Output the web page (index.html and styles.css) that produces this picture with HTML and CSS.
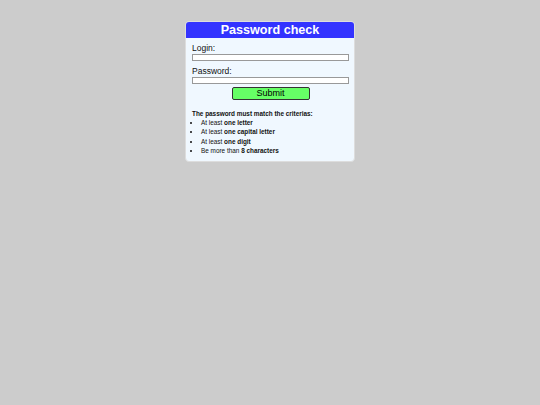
FILE: index.html
```html
<!DOCTYPE html>
<html>
<head>
<meta charset="utf-8">
<link rel="stylesheet" href="styles.css">
</head>
<body>
<div class="card">
  <div class="card-header">Password check</div>
  <form class="card-body">
    <label class="field-label" for="login">Login:</label>
    <input class="field-input" id="login" type="text">
    <label class="field-label" for="password">Password:</label>
    <input class="field-input" id="password" type="password">
    <div class="actions"><button class="submit" type="button">Submit</button></div>
    <div class="rules">
      <p class="rules-title">The password must match the criterias:</p>
      <ul class="rules-list">
        <li>At least <b>one letter</b></li>
        <li>At least <b>one capital letter</b></li>
        <li>At least <b>one digit</b></li>
        <li>Be more than <b>8 characters</b></li>
      </ul>
    </div>
  </form>
</div>
</body>
</html>
```
FILE: styles.css
```css
html, body {
  margin: 0;
  padding: 0;
  background: #cccccc;
  font-family: "Liberation Sans", Arial, sans-serif;
}
body {
  padding-top: 21px;
}
.card {
  width: 168px;
  margin: 0 auto;
  background: #f0f8ff;
  border: 1px solid #dddddd;
  border-radius: 4px;
  overflow: hidden;
}
.card-header {
  background: #3333ff;
  color: #ffffff;
  font-weight: bold;
  font-size: 12.6px;
  height: 16px;
  line-height: 16px;
  text-align: center;
}
.card-body {
  display: flex;
  flex-direction: column;
  padding: 5px 5px 6px 6px;
  margin: 0;
}
.field-label {
  font-size: 8.5px;
  color: #111;
  line-height: 11px;
}
.field-input {
  height: 7px;
  box-sizing: border-box;
  border: 1px solid #999;
  background: #fff;
  padding: 0;
  margin: 0 0 5px;
  width: 100%;
}
.actions {
  display: flex;
  justify-content: center;
  margin-top: -2px;
}
.submit {
  width: 78px;
  height: 13px;
  background: #66ff66;
  border: 1px solid #333;
  border-radius: 2px;
  font-family: "Liberation Sans", Arial, sans-serif;
  font-size: 9px;
  line-height: 11px;
  padding: 0;
  color: #000;
}
.rules {
  margin-top: 10px;
  font-size: 6.4px;
  color: #111;
}
.rules-title {
  font-weight: bold;
  margin: 0 0 1px;
}
.rules-list {
  margin: 0;
  padding-left: 9px;
}
.rules-list li {
  line-height: 9.35px;
}
```
